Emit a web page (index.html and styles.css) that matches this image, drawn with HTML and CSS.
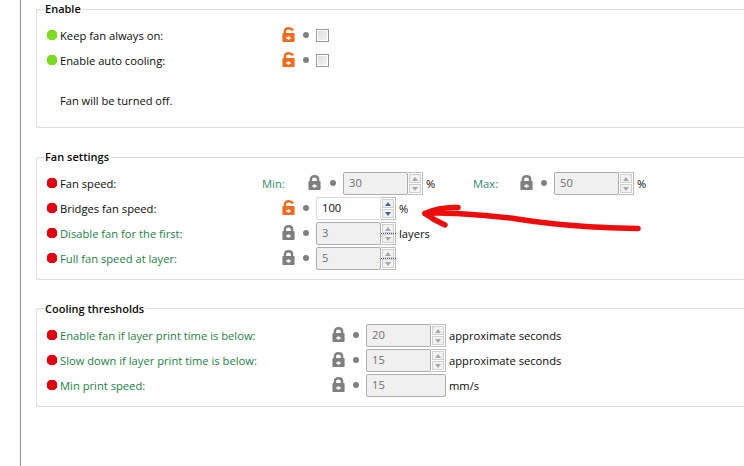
FILE: index.html
```html
<!DOCTYPE html>
<html lang="en">
<head>
<meta charset="utf-8">
<title>Cooling</title>
<link rel="stylesheet" href="styles.css">
</head>
<body>
<svg class="defs" width="0" height="0" aria-hidden="true">
  <symbol id="locked" viewBox="0 0 13 16">
    <path d="M1 6.500h11a1 1 0 0 1 1 1V15a1 1 0 0 1-1 1H1a1 1 0 0 1-1-1V7.500a1 1 0 0 1 1-1z" fill="currentColor"/>
    <path d="M2.700 8V4.500C2.700 2.300 4.300 1.300 6.500 1.300S10.300 2.300 10.300 4.500V8" fill="none" stroke="currentColor" stroke-width="2.600"/>
    <path d="M4 11h5v1.500H4z" fill="#fff"/><path d="M5.500 10h2v3.500h-2z" fill="#fff"/>
  </symbol>
  <symbol id="open" viewBox="0 0 13 16">
    <path d="M1 6.500h11a1 1 0 0 1 1 1V15a1 1 0 0 1-1 1H1a1 1 0 0 1-1-1V7.500a1 1 0 0 1 1-1z" fill="currentColor"/>
    <path d="M2.700 8V4.500C2.700 2.300 4.300 1.300 6.500 1.300S10.300 2 11.500 3.500" fill="none" stroke="currentColor" stroke-width="2.600"/>
    <path d="M4 11h5v1.500H4z" fill="#fff"/><path d="M5.500 10h2v3.500h-2z" fill="#fff"/>
  </symbol>
  <symbol id="mark" viewBox="0 0 10 10">
    <path d="M2.500 0h5L10 2.500v5L7.500 10h-5L0 7.500v-5z" fill="currentColor"/>
  </symbol>
</svg>
<main class="page">
  <section class="group group-enable">
    <h2 class="title">Enable</h2>
    <div class="row">
      <svg class="mark ok"><use href="#mark"/></svg>
      <span class="label w-fan">Keep fan always on:</span>
      <svg class="lock open"><use href="#open"/></svg><i class="dot"></i>
      <span class="check"></span>
    </div>
    <div class="row">
      <svg class="mark ok"><use href="#mark"/></svg>
      <span class="label w-fan">Enable auto cooling:</span>
      <svg class="lock open"><use href="#open"/></svg><i class="dot"></i>
      <span class="check"></span>
    </div>
    <p class="note">Fan will be turned off.</p>
  </section>

  <section class="group group-fan">
    <h2 class="title">Fan settings</h2>
    <div class="row">
      <svg class="mark err"><use href="#mark"/></svg>
      <span class="label w-short">Fan speed:</span>
      <span class="sub w-min">Min:</span>
      <svg class="lock gap"><use href="#locked"/></svg><i class="dot"></i>
      <span class="field off">30</span>
      <span class="spin off"><b class="up"></b><b class="down"></b></span>
      <span class="unit w-pct">%</span>
      <span class="sub w-max">Max:</span>
      <svg class="lock"><use href="#locked"/></svg><i class="dot"></i>
      <span class="field off">50</span>
      <span class="spin off"><b class="up"></b><b class="down"></b></span>
      <span class="unit w-end">%</span>
    </div>
    <div class="row">
      <svg class="mark err"><use href="#mark"/></svg>
      <span class="label w-fan">Bridges fan speed:</span>
      <svg class="lock open"><use href="#open"/></svg><i class="dot"></i>
      <span class="field">100</span>
      <span class="spin"><b class="up"></b><b class="down"></b></span>
      <span class="unit">%</span>
    </div>
    <div class="row">
      <svg class="mark err"><use href="#mark"/></svg>
      <span class="label w-fan changed">Disable fan for the first:</span>
      <svg class="lock"><use href="#locked"/></svg><i class="dot"></i>
      <span class="field off">3</span>
      <span class="spin off dotted"><b class="up"></b><b class="down"></b></span>
      <span class="unit">layers</span>
    </div>
    <div class="row">
      <svg class="mark err"><use href="#mark"/></svg>
      <span class="label w-fan changed">Full fan speed at layer:</span>
      <svg class="lock"><use href="#locked"/></svg><i class="dot"></i>
      <span class="field off">5</span>
      <span class="spin off dotted"><b class="up"></b><b class="down"></b></span>
    </div>
  </section>

  <section class="group group-cool">
    <h2 class="title">Cooling thresholds</h2>
    <div class="row">
      <svg class="mark err"><use href="#mark"/></svg>
      <span class="label w-cool changed">Enable fan if layer print time is below:</span>
      <svg class="lock"><use href="#locked"/></svg><i class="dot"></i>
      <span class="field off">20</span>
      <span class="spin off"><b class="up"></b><b class="down"></b></span>
      <span class="unit">approximate seconds</span>
    </div>
    <div class="row">
      <svg class="mark err"><use href="#mark"/></svg>
      <span class="label w-cool changed">Slow down if layer print time is below:</span>
      <svg class="lock"><use href="#locked"/></svg><i class="dot"></i>
      <span class="field off">15</span>
      <span class="spin off"><b class="up"></b><b class="down"></b></span>
      <span class="unit">approximate seconds</span>
    </div>
    <div class="row">
      <svg class="mark err"><use href="#mark"/></svg>
      <span class="label w-cool changed">Min print speed:</span>
      <svg class="lock"><use href="#locked"/></svg><i class="dot"></i>
      <span class="field off wide">15</span>
      <span class="unit">mm/s</span>
    </div>
  </section>
</main>
<svg class="arrow" width="744" height="466" viewBox="0 0 744 466" aria-hidden="true">
  <path d="M638 228.500C615 228 590 227 573 225.500C550 224 530 221 517 219C495 216 475 214.500 457 213.500C445 213 435 212.500 425 213.500" fill="none" stroke="#ee0c0c" stroke-width="5.500" stroke-linecap="round"/>
  <path d="M458 207.500C447 207 435 209 425 213.500C431 218 438 222 445 225" fill="none" stroke="#ee0c0c" stroke-width="5.500" stroke-linecap="round" stroke-linejoin="round"/>
</svg>
</body>
</html>
```
FILE: styles.css
```css
* { box-sizing: border-box; }
html, body {
  margin: 0;
  width: 744px;
  height: 466px;
  overflow: hidden;
  background: #fff;
}
body {
  position: relative;
  font-family: "Open Sans", "Noto Sans", sans-serif;
  font-size: 11.2px;
  color: #0a0a0a;
}
.defs { position: absolute; }
.page {
  margin-left: 20px;
  width: 724px;
  height: 466px;
  border-left: 1px solid #8b9096;
  padding: 9px 0 0 15px;
}
.group {
  border: 1px solid #d6dfe6;
  border-right: 0;
  border-radius: 3px 0 0 3px;
  padding-left: 10px;
}
.group-enable { height: 119px; margin-bottom: 29px; }
.group-fan { height: 123px; margin-bottom: 28px; }
.group-cool { height: 99px; }
.title {
  margin: -9px 0 6px -3px;
  width: fit-content;
  padding: 0 2px 0 1px;
  height: 16px;
  line-height: 16px;
  font-size: 11px;
  font-weight: 600;
  background: #fff;
  color: #0a0a0a;
}
.group-cool .title { margin-top: -8px; margin-bottom: 6px; }
.row {
  display: flex;
  align-items: center;
  height: 25px;
  white-space: nowrap;
}
.mark { width: 10px; height: 10px; margin-right: 3px; flex: none; position: relative; top: -1px; }
.ok { color: #7ddc22; }
.err { color: #e3000f; }
.label { flex: none; }
.w-fan { width: 222px; }
.w-short { width: 202px; }
.w-cool { width: 272px; }
.changed { color: #1d7f45; }
.sub { flex: none; color: #2e8b6b; }
.w-min { width: 46px; }
.w-max { width: 47px; }
.w-pct { width: 47px; margin-left: 1px; }
.w-end { margin-left: 2px; }
.lock { width: 13px; height: 15px; margin-right: 8px; flex: none; color: #7f7f7f; position: relative; top: -1px; }
.lock.gap { margin-right: 9px; }
.lock.open { color: #f16b1f; }
.dot { width: 6px; height: 6px; border-radius: 50%; background: #808080; margin-right: 7px; flex: none; position: relative; top: -1px; }
.check {
  width: 13px;
  height: 13px;
  border: 1px solid #9a9a9a;
  background: linear-gradient(135deg, #dcdcdc, #f8f8f8);
  box-shadow: inset 0 0 0 1px #fff;
  flex: none;
}
.note { margin: 20px 0 0 13px; line-height: 16px; font-size: 11.1px; }
.field {
  flex: none;
  width: 65px;
  height: 23px;
  line-height: 20px;
  padding-left: 5px;
  border: 1px solid #dadada;
  border-radius: 2px;
  background: #fff;
  color: #0a0a0a;
}
.field.off { border-color: #adadad; background: #f0f0f0; color: #6f6f6f; }
.field.wide { width: 80px; }
.spin {
  flex: none;
  position: relative;
  width: 15px;
  height: 23px;
  display: flex;
  flex-direction: column;
  gap: 1px;
  padding: 1px;
  border: 1px solid #bdbdbd;
  border-left: 0;
}
.spin.dotted::before {
  content: "";
  position: absolute;
  left: 0;
  right: -1px;
  top: 10px;
  border-top: 1px dotted #3c4f8f;
}
.spin b {
  flex: 1;
  display: flex;
  align-items: center;
  justify-content: center;
  background: #f2f2f2;
  border: 1px solid #cfcfcf;
}
.spin b::after {
  content: "";
  border-left: 3px solid transparent;
  border-right: 3px solid transparent;
}
.spin .up::after { border-bottom: 4px solid #4a5fa5; }
.spin .down::after { border-top: 4px solid #4a5fa5; }
.spin.off .up::after { border-bottom-color: #a8a8a8; }
.spin.off .down::after { border-top-color: #a8a8a8; }
.unit { flex: none; margin-left: 3px; }
.arrow { position: absolute; left: 0; top: 0; pointer-events: none; }
```
